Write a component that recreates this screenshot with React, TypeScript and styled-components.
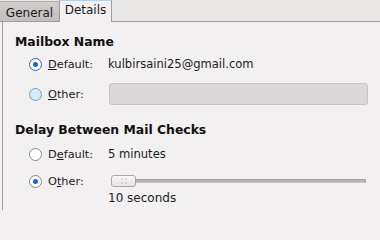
import React from "react";
import styled, { createGlobalStyle } from "styled-components";

const Global = createGlobalStyle`
  html, body { margin: 0; padding: 0; background: #f2f0f0; }
  body { font-family: "DejaVu Sans", "Liberation Sans", sans-serif; color: #1c1c1c; }
  #root { width: 380px; height: 210px; overflow: hidden; }
`;

const Window = styled.div`
  width: 380px;
  height: 210px;
  display: flex;
  flex-direction: column;
  background: #f2f0f0;
`;

const TabStrip = styled.div`
  height: 21px;
  display: flex;
  align-items: flex-end;
  background: #e9e7e6;
  border-bottom: 1px solid #a19d9c;
`;

const Tab = styled.div<{ $active?: boolean }>`
  box-sizing: border-box;
  font-size: 12px;
  display: flex;
  align-items: center;
  justify-content: center;
  color: #1a1a1a;
  ${(p) =>
    p.$active
      ? `
    width: 53px;
    height: 22px;
    margin-bottom: -1px;
    padding-bottom: 3px;
    background: #f2f0f0;
    border: 1px solid #a19d9c;
    border-top: 1px solid #b9d0e2;
    border-bottom: none;
  `
      : `
    width: 59px;
    height: 20px;
    padding-top: 2px;
    background: linear-gradient(#d3cfce, #c3bdbc);
    border-top: 1px solid #b3aead;
  `}
`;

const Panel = styled.div`
  flex: 1;
  margin-left: 2px;
  border-left: 1px solid #a19d9c;
  padding: 12px 12px 0 12px;
  display: flex;
  flex-direction: column;
`;

const Title = styled.div<{ $top?: number }>`
  font-size: 12.4px;
  font-weight: bold;
  height: 16px;
  line-height: 16px;
  margin-top: ${(p) => p.$top ?? 0}px;
  color: #111;
`;

const Row = styled.div<{ $top: number; $h?: number }>`
  display: flex;
  align-items: center;
  height: ${(p) => p.$h ?? 22}px;
  margin-top: ${(p) => p.$top}px;
  font-size: 11.3px;
`;

const Radio = styled.span<{ $checked?: boolean; $variant?: "focus" | "hover" | "plain" }>`
  box-sizing: border-box;
  width: 13px;
  height: 13px;
  margin-left: 14px;
  border-radius: 50%;
  flex: none;
  display: flex;
  align-items: center;
  justify-content: center;
  border: ${(p) => (p.$variant === "focus" ? "1.5px" : "1px")} solid
    ${(p) => (p.$variant === "focus" ? "#2f6bb5" : p.$variant === "hover" ? "#6a9fc6" : "#8f8b8a")};
  background: ${(p) => (p.$variant === "hover" ? "#d5ebf8" : "#ffffff")};
  &::after {
    content: "";
    width: 5px;
    height: 5px;
    border-radius: 50%;
    background: #1967cf;
    display: ${(p) => (p.$checked ? "block" : "none")};
  }
`;

const Label = styled.span`
  margin-left: 6px;
  width: 60px;
  flex: none;
  color: #1c1c1c;
  u {
    text-decoration: underline;
    text-underline-offset: 1px;
  }
`;

const Value = styled.span`
  font-size: 11.55px;
  color: #1c1c1c;
`;

const TextInput = styled.div`
  flex: 1;
  height: 22px;
  box-sizing: border-box;
  margin-left: 1px;
  background: #dcd8d7;
  border: 1px solid #c8c4c3;
  border-radius: 3px;
`;

const Slider = styled.div`
  flex: 1;
  margin-left: 3px;
  margin-right: 2px;
  display: flex;
  align-items: center;
  height: 13px;
`;

const Thumb = styled.div`
  box-sizing: border-box;
  width: 25px;
  height: 12px;
  border: 1px solid #a9a5a4;
  border-radius: 3px;
  background: linear-gradient(#f9f8f8, #e6e3e2);
  display: grid;
  grid-template-columns: 2px 2px;
  grid-template-rows: 2px 2px;
  gap: 2px;
  align-content: center;
  justify-content: center;
  flex: none;
  span {
    width: 2px;
    height: 2px;
    border-radius: 50%;
    background: #cfcbca;
  }
`;

const Track = styled.div`
  flex: 1;
  height: 4px;
  box-sizing: border-box;
  background: #b8b4b3;
  border-top: 1px solid #a6a2a1;
  border-bottom: 1px solid #c8c4c3;
  border-right: 1px solid #a6a2a1;
`;

const Caption = styled.div`
  font-size: 12px;
  height: 14px;
  line-height: 14px;
  margin-left: 93px;
  color: #1c1c1c;
`;

export default function App() {
  return (
    <>
      <Global />
      <Window>
        <TabStrip>
          <Tab>General</Tab>
          <Tab $active>Details</Tab>
        </TabStrip>
        <Panel>
          <Title>Mailbox Name</Title>
          <Row $top={3}>
            <Radio $checked $variant="focus" />
            <Label>
              <u>D</u>efault:
            </Label>
            <Value>kulbirsaini25@gmail.com</Value>
          </Row>
          <Row $top={8}>
            <Radio $variant="hover" />
            <Label>
              <u>O</u>ther:
            </Label>
            <TextInput />
          </Row>
          <Title $top={17}>Delay Between Mail Checks</Title>
          <Row $top={6} $h={20}>
            <Radio $variant="plain" />
            <Label>
              D<u>e</u>fault:
            </Label>
            <Value>5 minutes</Value>
          </Row>
          <Row $top={7} $h={20}>
            <Radio $checked $variant="plain" />
            <Label>
              O<u>t</u>her:
            </Label>
            <Slider>
              <Thumb>
                <span />
                <span />
                <span />
                <span />
              </Thumb>
              <Track />
            </Slider>
          </Row>
          <Caption>10 seconds</Caption>
        </Panel>
      </Window>
    </>
  );
}
